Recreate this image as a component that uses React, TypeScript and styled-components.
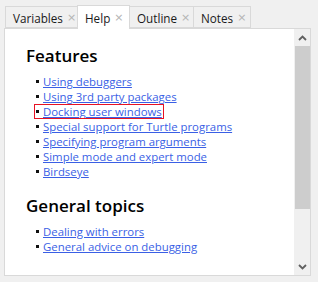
import React from "react";
import styled, { createGlobalStyle } from "styled-components";

const Global = createGlobalStyle`
  html, body { margin: 0; padding: 0; background: #f0f0f0; }
  body { width: 318px; height: 282px; overflow: hidden; font-family: "Open Sans", "Noto Sans", sans-serif; }
`;

const Frame = styled.div`
  width: 318px;
  height: 282px;
  display: flex;
  flex-direction: column;
`;

const TabBar = styled.div`
  display: flex;
  align-items: flex-end;
  height: 28px;
  padding-left: 5px;
  box-sizing: border-box;
  position: relative;
  z-index: 1;
`;

const Tab = styled.div<{ $active?: boolean; $w: number }>`
  box-sizing: border-box;
  width: ${(p) => p.$w}px;
  height: ${(p) => (p.$active ? 24 : 22)}px;
  margin-bottom: ${(p) => (p.$active ? -1 : 0)}px;
  background: ${(p) => (p.$active ? "#ffffff" : "#f0f0f0")};
  border: 1px solid #d9d9d9;
  border-bottom: ${(p) => (p.$active ? "none" : "1px solid #d9d9d9")};
  margin-right: -1px;
  display: flex;
  align-items: center;
  padding-left: 7px;
  padding-top: ${(p) => (p.$active ? 0 : 1)}px;
  font-size: 11.7px;
  color: #1a1a1a;
  gap: 4px;
`;

const Close = styled.span`
  color: #b4b4b4;
  font-size: 11px;
  font-family: "DejaVu Sans", sans-serif;
`;

const Panel = styled.div`
  margin-left: 4px;
  width: 307px;
  height: 248px;
  box-sizing: border-box;
  border: 1px solid #d9d9d9;
  background: #ffffff;
  display: flex;
`;

const Content = styled.div`
  flex: 1;
  padding: 16px 0 0 21px;
  overflow: hidden;
`;

const Heading = styled.div`
  font-size: 17px;
  font-weight: 600;
  color: #000;
  line-height: 22px;
  margin-bottom: 7px;
`;

const List = styled.div`
  display: flex;
  flex-direction: column;
  padding-left: 10px;
`;

const Item = styled.div<{ $boxed?: boolean }>`
  display: flex;
  align-items: center;
  height: 15px;
  font-size: 11.4px;
  line-height: 15px;
  white-space: nowrap;
  gap: 4px;
  width: fit-content;
  margin-left: ${(p) => (p.$boxed ? -2 : 0)}px;
  padding-left: ${(p) => (p.$boxed ? 2 : 0)}px;
  padding-right: ${(p) => (p.$boxed ? 2 : 0)}px;
  outline: ${(p) => (p.$boxed ? "1px solid #e81123" : "none")};
  outline-offset: -1px;
`;

const Bullet = styled.span`
  width: 3px;
  height: 3px;
  background: #111;
  flex: none;
`;

const Link = styled.a`
  color: #3a5fe5;
  text-decoration: underline;
  text-underline-offset: 1px;
`;

const Section = styled.div`
  margin-bottom: 16px;
`;

const ScrollBar = styled.div`
  width: 16px;
  background: #f0f0f0;
  display: flex;
  flex-direction: column;
  align-items: center;
`;

const Arrow = styled.div`
  height: 17px;
  width: 16px;
  display: flex;
  align-items: center;
  justify-content: center;
`;

const Thumb = styled.div`
  width: 15px;
  height: 163px;
  background: #cdcdcd;
`;

const Track = styled.div`
  flex: 1;
`;

const features = [
  "Using debuggers",
  "Using 3rd party packages",
  "Docking user windows",
  "Special support for Turtle programs",
  "Specifying program arguments",
  "Simple mode and expert mode",
  "Birdseye",
];

const general = ["Dealing with errors", "General advice on debugging"];

const Chevron = ({ down }: { down?: boolean }) => (
  <svg width="9" height="6" viewBox="0 0 9 6">
    <path
      d={down ? "M1 1 L4.5 4.5 L8 1" : "M1 5 L4.5 1.5 L8 5"}
      fill="none"
      stroke="#606060"
      strokeWidth="1.8"
    />
  </svg>
);

export default function App() {
  return (
    <Frame>
      <Global />
      <TabBar>
        <Tab $w={73}>
          Variables <Close>×</Close>
        </Tab>
        <Tab $w={53} $active>
          Help <Close>×</Close>
        </Tab>
        <Tab $w={65}>
          Outline <Close>×</Close>
        </Tab>
        <Tab $w={58}>
          Notes <Close>×</Close>
        </Tab>
      </TabBar>
      <Panel>
        <Content>
          <Section>
            <Heading>Features</Heading>
            <List>
              {features.map((f) => (
                <Item key={f} $boxed={f === "Docking user windows"}>
                  <Bullet />
                  <Link>{f}</Link>
                </Item>
              ))}
            </List>
          </Section>
          <Section>
            <Heading>General topics</Heading>
            <List>
              {general.map((f) => (
                <Item key={f}>
                  <Bullet />
                  <Link>{f}</Link>
                </Item>
              ))}
            </List>
          </Section>
        </Content>
        <ScrollBar>
          <Arrow>
            <Chevron />
          </Arrow>
          <Thumb />
          <Track />
          <Arrow>
            <Chevron down />
          </Arrow>
        </ScrollBar>
      </Panel>
    </Frame>
  );
}
